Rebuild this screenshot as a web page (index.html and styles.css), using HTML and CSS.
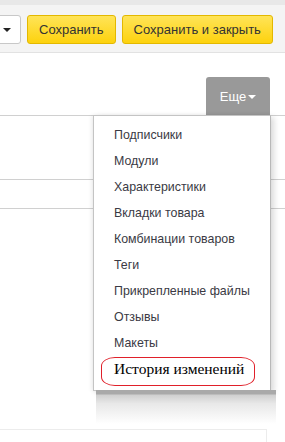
FILE: index.html
```html
<!DOCTYPE html>
<html lang="ru">
<head>
    <meta charset="UTF-8">
    <meta name="viewport" content="width=device-width, initial-scale=1.0">
    <title>Товар</title>
    <link rel="stylesheet" href="styles.css">
</head>
<body>

<div class="screen">
    <div class="toolbar">
        <button class="btn-drop"><span class="caret dark"></span></button>
        <button class="btn-save">Сохранить</button>
        <button class="btn-save">Сохранить и закрыть</button>
    </div>

    <div class="more-row">
        <button class="btn-more">Еще<span class="caret"></span></button>
    </div>

    <div class="form-lines">
        <div class="line tall"></div>
        <div class="line"></div>
    </div>

    <div class="panel"></div>

    <ul class="menu">
        <li>Подписчики</li>
        <li>Модули</li>
        <li>Характеристики</li>
        <li>Вкладки товара</li>
        <li>Комбинации товаров</li>
        <li>Теги</li>
        <li>Прикрепленные файлы</li>
        <li>Отзывы</li>
        <li>Макеты</li>
        <li class="history"><span class="mark">История изменений</span></li>
    </ul>
</div>

</body>
</html>
```

FILE: styles.css
```css
body {
    margin: 0;
    background: #fff;
    font-family: "Liberation Sans", Arial, sans-serif;
    font-size: 13px;
    color: #333;
}
.screen {
    position: relative;
    width: 285px;
    height: 442px;
    overflow: hidden;
}
.toolbar {
    display: flex;
    gap: 6px;
    height: 37px;
    padding-top: 10px;
    border-top: 5px solid #e8e8e8;
    border-bottom: 1px solid #e2e2e2;
    background: #f4f4f4;
}
.toolbar button {
    height: 29px;
    font-family: inherit;
    font-size: 13px;
    color: #333;
    border-radius: 3px;
    padding: 0 11px;
}
.btn-drop {
    width: 30px;
    margin-left: -9px;
    background: #fff;
    border: 1px solid #c8c8c8;
}
.btn-save {
    background: linear-gradient(#ffe458, #fdd20e);
    border: 1px solid #e3b800;
}
.caret {
    display: inline-block;
    width: 0;
    height: 0;
    border-left: 4px solid transparent;
    border-right: 4px solid transparent;
    border-top: 4px solid #fff;
    margin-left: 2px;
    vertical-align: 2px;
}
.caret.dark {
    border-top-color: #222;
    margin-left: 0;
}
.more-row {
    display: flex;
    justify-content: flex-end;
    padding-right: 15px;
    margin-top: 24px;
}
.btn-more {
    width: 64px;
    height: 38px;
    border: none;
    border-radius: 3px 3px 0 0;
    background: #999;
    color: #fff;
    font-family: inherit;
    font-size: 13px;
    padding: 0;
}
.form-lines {
    border-top: 1px solid #d0d0d0;
}
.line {
    height: 28px;
    border-bottom: 1px solid #d0d0d0;
}
.line.tall {
    height: 63px;
}
.panel {
    margin-top: 220px;
    width: 266px;
    height: 20px;
    border-top: 1px solid #ececec;
    border-right: 1px solid #ececec;
}
.menu {
    position: absolute;
    top: 115px;
    left: 93px;
    width: 176px;
    margin: 0;
    padding: 6px 0 8px;
    list-style: none;
    background: #fff;
    border: 1px solid #c4c4c4;
    border-right-color: #b8b8b8;
    box-shadow: 3px 2px 6px rgba(0, 0, 0, 0.15), -2px 0 4px rgba(0, 0, 0, 0.06);
    font-size: 12.4px;
    color: #3a3a44;
}
.menu::after {
    content: "";
    position: absolute;
    top: 100%;
    left: 2px;
    right: -6px;
    height: 34px;
    background: linear-gradient(#a9a9a9 0, #a9a9a9 4px, #cfcfcf 5px, #e8e8e8 40%, #fff 100%);
}
.menu li {
    height: 26px;
    line-height: 26px;
    padding-left: 20px;
    white-space: nowrap;
}
.menu .history {
    position: relative;
    font-family: "Liberation Serif", "Times New Roman", serif;
    font-size: 15.5px;
    color: #000;
}
.mark::before {
    content: "";
    position: absolute;
    left: 7px;
    top: 1px;
    width: 152px;
    height: 27px;
    border: 1px solid #e0202a;
    border-radius: 14px / 9px;
}
```
